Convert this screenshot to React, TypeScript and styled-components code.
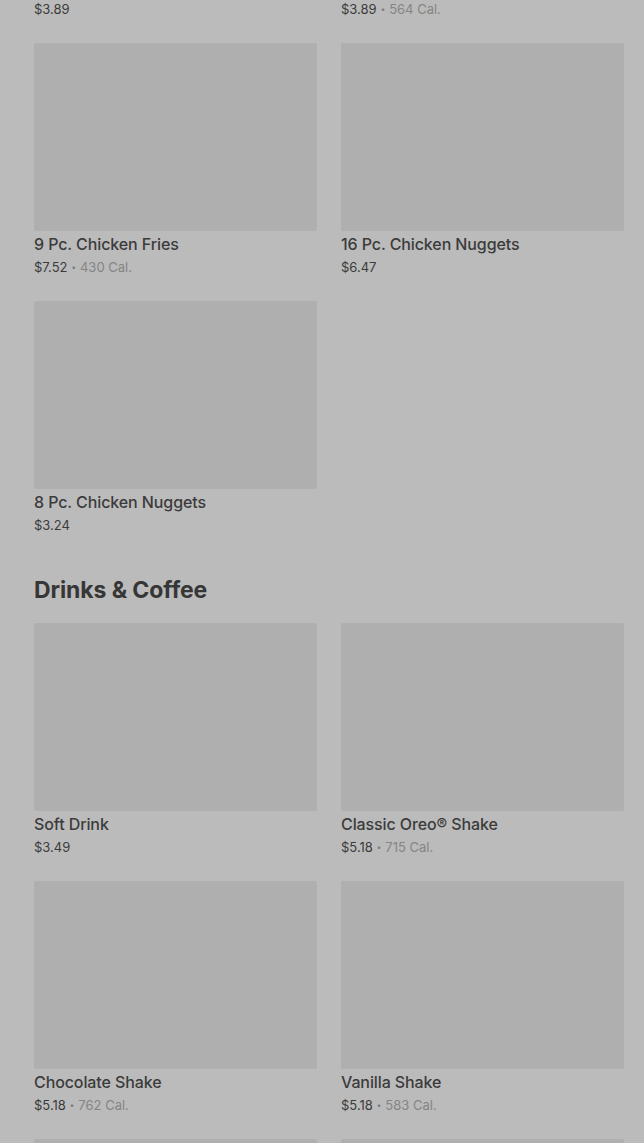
import React from "react";
import styled, { createGlobalStyle } from "styled-components";

type Item = {
  title: string;
  price: string;
  cal?: string;
};

const GlobalStyle = createGlobalStyle`
  html, body {
    margin: 0;
    padding: 0;
    background-color: #bbbbbb;
    overflow: hidden;
  }
  body {
    font-family: Inter, "Noto Sans", "Liberation Sans", sans-serif;
    color: #3b3b3b;
  }
`;

const Page = styled.div`
  width: 644px;
  height: 1143px;
  overflow: hidden;
  background-color: #bbbbbb;
`;

// the list is scrolled: the row above is mostly out of view
const Scroller = styled.div`
  margin-top: -215px;
  padding: 0 20px 0 34px;
`;

const Section = styled.section`
  & + & {
    margin-top: 41px;
  }
`;

const Heading = styled.h2`
  margin: 0 0 19px;
  font-size: 23px;
  line-height: 28px;
  font-weight: 700;
  letter-spacing: -0.1px;
  color: #363636;
`;

const Grid = styled.div`
  display: grid;
  grid-template-columns: 283px 283px;
  column-gap: 24px;
  row-gap: 24px;
`;

const Card = styled.div`
  display: flex;
  flex-direction: column;
`;

const Thumb = styled.div`
  height: 188px;
  background-color: #afafaf;
  border-radius: 2px;
`;

const Title = styled.div`
  margin-top: 1px;
  font-size: 16px;
  line-height: 24px;
  font-weight: 500;
  letter-spacing: -0.1px;
  color: #3b3b3b;
`;

const Meta = styled.div`
  padding-top: 1px;
  font-size: 13px;
  line-height: 20px;
  color: #3b3b3b;
  display: flex;
  align-items: center;
  gap: 4px;
`;

const Dot = styled.span`
  font-size: 8px;
  color: #7a7a7a;
`;

const Cal = styled.span`
  color: #858585;
`;

const sides: Item[] = [
  { title: "Large Fries", price: "$3.89" },
  { title: "Onion Rings", price: "$3.89", cal: "564 Cal." },
  { title: "9 Pc. Chicken Fries", price: "$7.52", cal: "430 Cal." },
  { title: "16 Pc. Chicken Nuggets", price: "$6.47" },
  { title: "8 Pc. Chicken Nuggets", price: "$3.24" },
];

const drinks: Item[] = [
  { title: "Soft Drink", price: "$3.49" },
  { title: "Classic Oreo® Shake", price: "$5.18", cal: "715 Cal." },
  { title: "Chocolate Shake", price: "$5.18", cal: "762 Cal." },
  { title: "Vanilla Shake", price: "$5.18", cal: "583 Cal." },
  { title: "Iced Coffee", price: "$2.99" },
  { title: "Hot Coffee", price: "$1.99" },
];

const MenuCard: React.FC<{ item: Item }> = ({ item }) => (
  <Card>
    <Thumb />
    <Title>{item.title}</Title>
    <Meta>
      <span>{item.price}</span>
      {item.cal && (
        <>
          <Dot>•</Dot>
          <Cal>{item.cal}</Cal>
        </>
      )}
    </Meta>
  </Card>
);

const App: React.FC = () => {
  return (
    <Page>
      <GlobalStyle />
      <Scroller>
        <Section>
          <Grid>
            {sides.map((item) => (
              <MenuCard key={item.title} item={item} />
            ))}
          </Grid>
        </Section>
        <Section>
          <Heading>Drinks &amp; Coffee</Heading>
          <Grid>
            {drinks.map((item) => (
              <MenuCard key={item.title} item={item} />
            ))}
          </Grid>
        </Section>
      </Scroller>
    </Page>
  );
};

export default App;
